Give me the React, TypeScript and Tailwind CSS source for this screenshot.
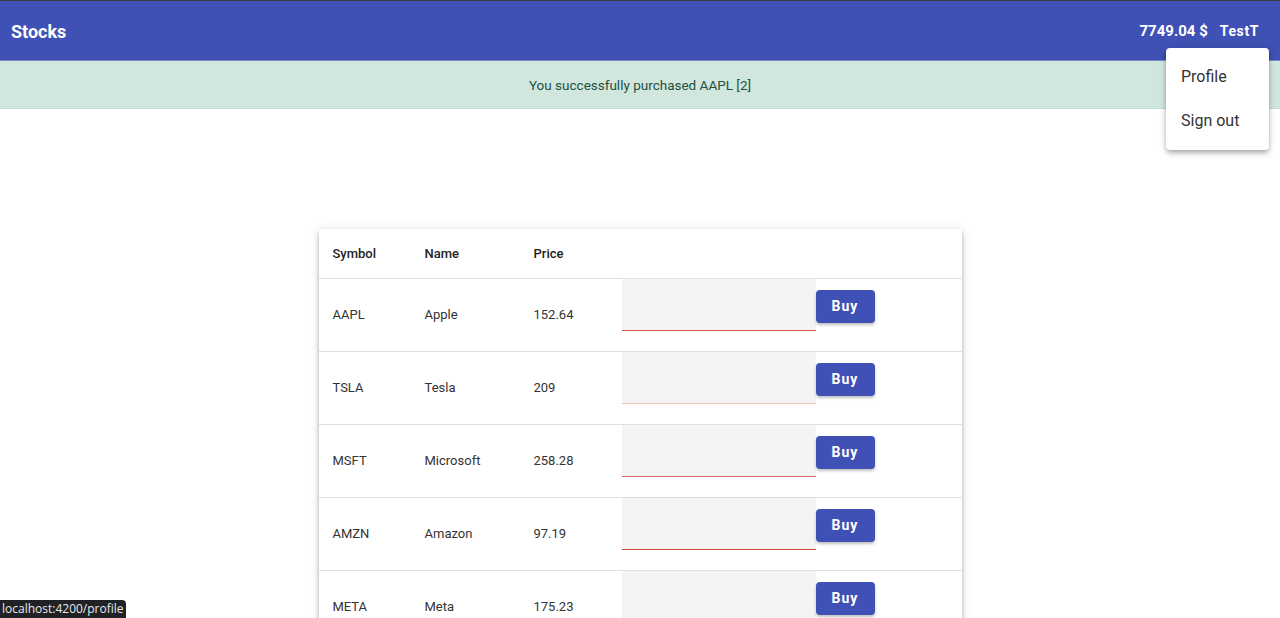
const stocks = [
  { symbol: 'AAPL', name: 'Apple', price: '152.64', line: 'bg-[#d0574b]' },
  { symbol: 'TSLA', name: 'Tesla', price: '209', line: 'bg-[#f3c2b3]' },
  { symbol: 'MSFT', name: 'Microsoft', price: '258.28', line: 'bg-[#d56a5c]' },
  { symbol: 'AMZN', name: 'Amazon', price: '97.19', line: 'bg-[#cc483c]' },
  { symbol: 'META', name: 'Meta', price: '175.23', line: 'bg-[#d0574b]' },
];

export default function App() {
  return (
    <div className="relative h-[618px] overflow-hidden bg-white font-['Roboto',sans-serif]">
      <div className="border-t border-[#3a3a3a]" />
      {/* toolbar */}
      <div className="flex h-[59px] items-center justify-between bg-[#3f51b5] pl-[11px] pr-[21px] pt-[2px] text-white">
        <span className="text-[18px] font-bold">Stocks</span>
        <div className="flex items-center gap-[12px]">
          <span className="text-[15px] font-bold">7749.04 $</span>
          <span className="text-[14px] font-bold tracking-[0.6px]">TestT</span>
        </div>
      </div>
      <div className="h-px bg-[#7d8ac9]" />

      {/* alert */}
      <div className="flex h-[48px] items-center justify-center border-b border-[#c5ddd2] bg-[#d1e7dd] pt-[1px] text-[13.5px] text-[#23503d]">
        You successfully purchased AAPL [2]
      </div>

      {/* table */}
      <div className="mx-auto mt-[120px] w-[643px] bg-white shadow-[0_2px_4px_-1px_rgba(0,0,0,0.2),0_4px_5px_0_rgba(0,0,0,0.14),0_1px_10px_0_rgba(0,0,0,0.12)]">
        <div className="flex h-[50px] items-center border-b border-[#e0e0e0] text-[13px] font-medium text-[#222]">
          <div className="w-[106px] pl-[14px]">Symbol</div>
          <div className="w-[109px]">Name</div>
          <div className="w-[88px]">Price</div>
        </div>
        {stocks.map((s) => (
          <div key={s.symbol} className="flex h-[73px] border-b border-[#e0e0e0] text-[13px] text-[#333]">
            <div className="flex w-[106px] items-center pl-[14px]">{s.symbol}</div>
            <div className="flex w-[109px] items-center">{s.name}</div>
            <div className="flex w-[88px] items-center">{s.price}</div>
            <div className="flex h-[52px] w-[194px] flex-col justify-end bg-[#f4f4f4]">
              <div className={`h-px ${s.line}`} />
            </div>
            <div className="pt-[11px]">
              <button className="h-[33px] w-[59px] rounded bg-[#3f51b5] text-[14px] font-bold tracking-[1px] text-white shadow-[0_2px_3px_rgba(0,0,0,0.25)]">
                Buy
              </button>
            </div>
          </div>
        ))}
      </div>

      {/* user menu */}
      <div className="absolute left-[1166px] top-[48px] w-[103px] rounded bg-white py-[7px] shadow-[0_2px_4px_-1px_rgba(0,0,0,0.2),0_4px_5px_0_rgba(0,0,0,0.14),0_1px_10px_0_rgba(0,0,0,0.12)]">
        <div className="flex h-[44px] items-center pl-[15px] text-[16px] text-[#333]">Profile</div>
        <div className="flex h-[44px] items-center pl-[15px] text-[16px] text-[#333]">Sign out</div>
      </div>

      {/* browser status */}
      <div className="absolute bottom-0 left-0 flex h-[18px] w-[126px] items-center rounded-tr bg-[#202124] pl-[2px] font-['Open_Sans',sans-serif] text-[12px] text-[#e8eaed]">
        localhost:4200/profile
      </div>
    </div>
  );
}
